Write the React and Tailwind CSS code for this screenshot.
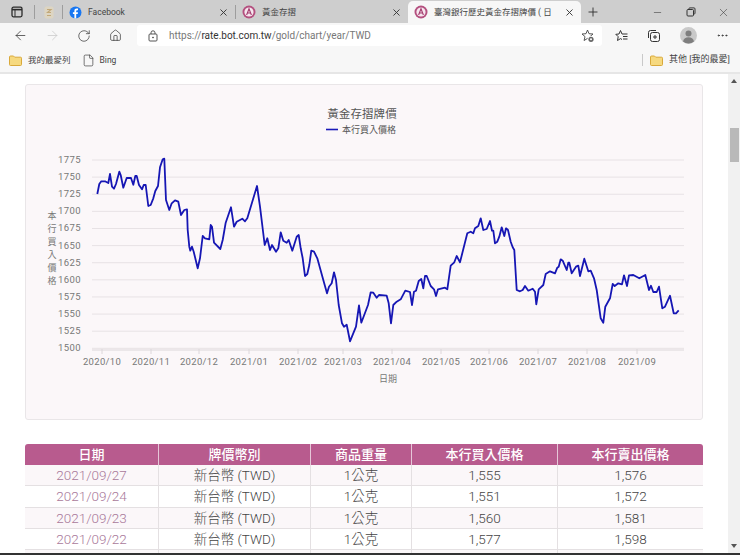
import {
  ArrowLeft,
  ArrowRight,
  RotateCw,
  Home,
  Plus,
  X,
  Minus,
  MoreHorizontal,
  File,
} from "lucide-react";

const cjk = "font-['Roboto','Noto_Sans_CJK_TC',sans-serif]";

/* line traced in three stretches, [ox, oy] is where each stretch starts */
const stretches = [
  [30, 90, [[202,312],[208,282],[214,274],[225,274],[235,279],[240,252],[246,290],[252,296],[258,282],[268,245],[272,255],[280,293],[290,264],[303,264],[310,284],[316,258],[320,258],[327,285],[336,298],[341,285],[347,285],[355,348],[362,345],[370,325],[376,303],[384,288],[390,232],[398,208],[403,206],[408,330],[418,360],[425,340],[435,331],[445,335],[453,375],[463,360],[471,358],[473,420],[478,470],[481,482],[486,470],[491,485],[503,535],[510,505],[518,438],[525,445],[538,448],[542,405],[546,410],[552,458],[571,477],[578,450],[587,398],[603,352],[612,410],[620,395],[637,386],[645,394],[652,385],[681,288],[690,350]]],
  [260, 200, [[0,20],[14,135],[22,115],[30,150],[36,135],[48,155],[55,145],[62,97],[70,122],[80,128],[86,120],[97,152],[110,110],[116,105],[122,145],[128,175],[135,228],[142,222],[148,195],[154,152],[162,155],[172,175],[190,240],[201,280],[207,260],[215,250],[222,217],[228,240],[236,315],[246,370],[252,380],[260,374],[270,424],[288,380],[297,316],[304,368],[324,315],[332,277],[340,278],[350,293],[357,285],[380,287],[386,310],[393,370],[400,315],[410,305],[422,298],[436,272],[450,276],[456,315],[462,275],[468,272],[476,243],[484,237],[490,265],[495,228],[500,228],[512,258],[522,268],[528,288],[534,268],[555,263],[562,268],[572,197],[583,187],[590,168],[600,187],[622,100],[632,95],[640,100]]],
  [470, 200, [[15,85],[25,78],[32,55],[40,90],[50,87],[60,63],[66,92],[70,92],[75,130],[82,125],[88,110],[95,82],[103,108],[108,85],[114,90],[122,125],[128,142],[133,150],[140,270],[150,274],[158,270],[165,258],[175,272],[188,266],[195,275],[199,313],[206,268],[220,255],[227,222],[240,214],[255,220],[262,203],[266,200],[272,178],[278,182],[290,210],[295,188],[298,188],[305,220],[318,200],[325,197],[330,228],[343,176],[355,214],[362,212],[372,235],[380,270],[392,355],[400,368],[406,320],[420,295],[428,252],[434,258],[445,250],[456,253],[462,226],[471,258],[477,226],[490,225],[508,235],[526,225],[537,270],[543,257],[550,276],[560,276],[567,260],[577,325],[585,320],[600,287],[611,340],[618,340],[626,331]]],
];

const linePoints = stretches
  .flatMap(([ox, oy, pts]) => pts.map(([x, y]) => `${(ox + x / 3).toFixed(1)},${(oy + y / 3).toFixed(1)}`))
  .join(" ");

const yTicks = [1775, 1750, 1725, 1700, 1675, 1650, 1625, 1600, 1575, 1550, 1525, 1500];
const xTicks = [
  ["2020/10", 102], ["2020/11", 151], ["2020/12", 199], ["2021/01", 249],
  ["2021/02", 298], ["2021/03", 343], ["2021/04", 392], ["2021/05", 441],
  ["2021/06", 489], ["2021/07", 538], ["2021/08", 587], ["2021/09", 637],
];

const rows = [
  ["2021/09/27", "1,555", "1,576"],
  ["2021/09/24", "1,551", "1,572"],
  ["2021/09/23", "1,560", "1,581"],
  ["2021/09/22", "1,577", "1,598"],
  ["2021/09/17", "1,566", "1,587"],
];

function BotLogo() {
  return (
    <svg width="14" height="14" viewBox="0 0 14 14" className="shrink-0">
      <circle cx="7" cy="7" r="6.5" fill="#b4507f" />
      <circle cx="7" cy="7" r="4.6" fill="#f6e6ee" />
      <path d="M4.6 10 7 3.8 9.4 10M5.5 8h3" fill="none" stroke="#a23a6c" strokeWidth="1.1" />
    </svg>
  );
}

function FolderIcon() {
  return (
    <svg width="13" height="11" viewBox="0 0 13 11" className="shrink-0">
      <path d="M.5 2A1 1 0 0 1 1.5 1h3l1.2 1.2h5.8a1 1 0 0 1 1 1V9.500a1 1 0 0 1-1 1h-10a1 1 0 0 1-1-1z" fill="#f6d97f" stroke="#d9a93a" />
    </svg>
  );
}

function Tab({ icon, title, width, active, close = true }) {
  return (
    <div
      className={`flex items-center h-[22px] shrink-0 pl-[6px] pr-[6px] ${active ? "bg-[#f7f7f7] rounded-t-[5px]" : ""} ${width}`}
    >
      {icon}
      <span className={`ml-[6px] pt-[1px] flex-1 whitespace-nowrap overflow-hidden text-[8.5px] text-[#444] ${cjk}`}>{title}</span>
      {close && <X size={11} strokeWidth={2} className="text-[#333] shrink-0" />}
    </div>
  );
}

function Sep() {
  return <div className="w-px h-[14px] bg-[#9d9d9d] shrink-0" />;
}

function TabStrip() {
  return (
    <div className="h-[23px] bg-[#cecece] flex items-end shrink-0">
      <div className="w-[34px] h-[22px] flex items-center justify-center shrink-0">
        <svg width="12" height="12" viewBox="0 0 12 12" className="mr-[1px]">
          <rect x="1" y="1.200" width="10" height="9.600" rx="1.500" fill="none" stroke="#2a2a2a" strokeWidth="1.300" />
          <path d="M1 3.600h10" stroke="#2a2a2a" strokeWidth="1.600" />
          <path d="M4 3.600v7" stroke="#2a2a2a" strokeWidth="1" />
        </svg>
      </div>
      <div className="h-[22px] flex items-center"><Sep /></div>
      <div className="w-[27px] h-[22px] flex items-center justify-center shrink-0">
        <svg width="10" height="13" viewBox="0 0 10 13">
          <rect x="0.500" y="0.500" width="9" height="12" rx="2" fill="#ddd5c2" />
          <path d="M3 3.500h4L3.500 6.500h3.500M3 9.500h4" stroke="#c2a878" strokeWidth="1.100" fill="none" />
        </svg>
      </div>
      <div className="h-[22px] flex items-center"><Sep /></div>
      <div className="flex h-[22px] items-center">
        <Tab
          width="w-[172px]"
          title="Facebook"
          icon={
            <svg width="13" height="13" viewBox="0 0 13 13" className="shrink-0">
              <circle cx="6.500" cy="6.500" r="6" fill="#1877f2" />
              <path d="M7.200 12.500V8h1.500l.3-1.800H7.200V5.100c0-.5.3-.9.9-.9H9V2.600c-.4 0-.9-.1-1.300-.1-1.400 0-2.300.9-2.300 2.300v1.400H3.900V8h1.500v4.500z" fill="#fff" />
            </svg>
          }
        />
        <Sep />
        <Tab width="w-[172px]" title="黃金存摺" icon={<BotLogo />} />
      </div>
      <Tab active width="w-[173px]" title="臺灣銀行歷史黃金存摺牌價 ( 日" icon={<BotLogo />} />
      <div className="h-[22px] w-[24px] flex items-center justify-center shrink-0">
        <Plus size={14} strokeWidth={1.6} className="text-[#333]" />
      </div>
      <div className="flex-1 flex h-[22px] items-center justify-end text-[#333]">
        <div className="w-[33px] flex justify-center"><Minus size={11} strokeWidth={1.2} /></div>
        <div className="w-[33px] flex justify-center">
          <svg width="10" height="10" viewBox="0 0 10 10" fill="none" stroke="#333">
            <rect x="1" y="2.500" width="6.500" height="6.500" rx="1" />
            <path d="M3 2.500V1.500a.6.6 0 0 1 .6-.6H8a1 1 0 0 1 1 1v4.400a.6.6 0 0 1-.6.6H7.500" />
          </svg>
        </div>
        <div className="w-[33px] flex justify-center"><X size={13} strokeWidth={1} /></div>
      </div>
    </div>
  );
}

function ToolBtn({ children, className = "" }) {
  return <div className={`w-[32px] h-[25px] flex items-center justify-center shrink-0 ${className}`}>{children}</div>;
}

function Toolbar() {
  return (
    <div className="h-[25px] bg-[#f7f7f7] flex items-center pl-[4px] text-[#333] shrink-0">
      <ToolBtn><ArrowLeft size={15} strokeWidth={1.2} /></ToolBtn>
      <ToolBtn><ArrowRight size={15} strokeWidth={1.2} className="text-[#c8c8c8]" /></ToolBtn>
      <ToolBtn><RotateCw size={14} strokeWidth={1.2} /></ToolBtn>
      <ToolBtn className="pr-[2px]"><Home size={13} strokeWidth={1.3} /></ToolBtn>
      <div className="ml-[5px] w-[465px] h-[21px] bg-white rounded-[3px] flex items-center shrink-0">
        <svg width="10" height="12" viewBox="0 0 10 12" fill="none" stroke="#555" className="ml-[11px] shrink-0">
          <rect x="1" y="4" width="8" height="7" rx="1" />
          <path d="M3 4V2.800a2 2 0 0 1 4 0V4" />
          <circle cx="5" cy="7.500" r=".5" fill="#555" />
        </svg>
        <span className="ml-[11px] flex-1 text-[10px] text-[#777] font-['Roboto',sans-serif]">
          https://<span className="text-[#333]">rate.bot.com.tw</span>/gold/chart/year/TWD
        </span>
        <svg width="14" height="14" viewBox="0 0 14 14" fill="none" stroke="#444" strokeWidth=".9" className="mr-[7px] shrink-0">
          <path d="M6.500 1 8 4.700 12 5 9 7.600 9.900 11.500 6.500 9.400 3.100 11.500 4 7.600 1 5 5 4.700z" />
          <circle cx="10" cy="10.300" r="3.400" fill="#fff" stroke="none" />
          <circle cx="10" cy="10.300" r="2.600" fill="#666" stroke="none" />
          <circle cx="10" cy="10.300" r="1" fill="#fff" stroke="none" />
        </svg>
      </div>
      <div className="ml-[4px] flex items-center">
        <ToolBtn>
          <svg width="14" height="14" viewBox="0 0 14 14" fill="none" stroke="#333" strokeWidth="1">
            <path d="M7 5 5.500 1.500 4 5 .8 5.300 3.200 7.700 2.500 11.500 5.500 9.600 7 10.500" />
            <path d="M7 5h5.500M8 7.500h4.500M8 10h4.500" />
          </svg>
        </ToolBtn>
        <ToolBtn>
          <svg width="14" height="14" viewBox="0 0 14 14" fill="none" stroke="#333" strokeWidth="1">
            <rect x="3.500" y="3.500" width="9" height="9" rx="2" />
            <path d="M1.500 9V3.500a2 2 0 0 1 2-2H9M8 6v4M6 8h4" />
          </svg>
        </ToolBtn>
        <div className="w-[36px] flex justify-center">
          <svg width="17" height="17" viewBox="0 0 17 17">
            <circle cx="8.500" cy="8.500" r="8.500" fill="#c9c9c9" />
            <circle cx="8.500" cy="6.600" r="3" fill="#7e7e7e" />
            <path d="M3 14.500c.6-3 2.800-4.200 5.500-4.200s4.900 1.200 5.500 4.200a8.500 8.500 0 0 1-11 0z" fill="#7e7e7e" />
          </svg>
        </div>
        <ToolBtn><MoreHorizontal size={13} strokeWidth={1.6} /></ToolBtn>
      </div>
    </div>
  );
}

function FavBar() {
  return (
    <div className={`h-[26px] bg-[#f7f7f7] border-b-2 border-[#e6e6e6] flex items-center pl-[9px] pr-[10px] text-[#444] shrink-0 ${cjk}`}>
      <FolderIcon />
      <span className="ml-[6px] text-[8.5px]">我的最愛列</span>
      <File size={13} strokeWidth={1.2} className="ml-[11px] text-[#333]" />
      <span className="ml-[5px] text-[8.5px]">Bing</span>
      <div className="ml-auto w-px h-[12px] bg-[#c9c9c9]" />
      <div className="ml-[7px]"><FolderIcon /></div>
      <span className="ml-[6px] text-[9px]">其他 [我的最愛]</span>
    </div>
  );
}

function Chart() {
  const label = "Roboto, 'Noto Sans CJK TC', sans-serif";
  return (
    <svg width="676" height="334" viewBox="26 85 676 334" className="block">
      <text x="362" y="118" textAnchor="middle" fontSize="11.500" letterSpacing="0.1" fill="#555" fontFamily={label}>黃金存摺牌價</text>
      <path d="M326 129.500h12" stroke="#1a1ab8" strokeWidth="1.600" />
      <text x="342" y="132.500" fontSize="9" fill="#555" fontFamily={label}>本行買入價格</text>

      {yTicks.map((v, i) => {
        const y = 160 + i * 17.12;
        return (
          <g key={v}>
            <path d={`M92 ${y}H684`} stroke="#e7e2e5" strokeWidth="1" />
            <text x="81" y={y + 3} textAnchor="end" fontSize="9.500" letterSpacing="0.4" fill="#777" fontFamily={label}>{v}</text>
          </g>
        );
      })}
      <path d="M92 350H684" stroke="#dcd7da" strokeWidth="1" />

      {xTicks.map(([t, x]) => (
        <g key={t}>
          <path d={`M${x} 349V354`} stroke="#dcd7da" strokeWidth="1" />
          <text x={x} y="365" textAnchor="middle" fontSize="9.500" letterSpacing="0.3" fill="#777" fontFamily={label}>{t}</text>
        </g>
      ))}

      {["本", "行", "買", "入", "價", "格"].map((c, i) => (
        <text key={c} x="52" y={219 + i * 13} textAnchor="middle" fontSize="9" fill="#777" fontFamily={label}>{c}</text>
      ))}
      <text x="388" y="382" textAnchor="middle" fontSize="9" fill="#777" fontFamily={label}>日期</text>

      <polyline points={linePoints} fill="none" stroke="#1616b4" strokeWidth="1.800" strokeLinejoin="round" />
    </svg>
  );
}

function PriceTable() {
  return (
    <table className={`mt-[24px] w-[678px] table-fixed border-separate border-spacing-0 text-center ${cjk}`}>
      <colgroup>
        <col className="w-[133px]" />
        <col className="w-[152px]" />
        <col className="w-[101px]" />
        <col className="w-[146px]" />
        <col className="w-[146px]" />
      </colgroup>
      <thead>
        <tr className="bg-[#b85b8e] text-white text-[13px] font-medium h-[21px]">
          <th className="rounded-tl-[3px] font-medium">日期</th>
          <th className="border-l border-[#e6c6d8] font-medium">牌價幣別</th>
          <th className="border-l border-[#e6c6d8] font-medium">商品重量</th>
          <th className="border-l border-[#e6c6d8] font-medium">本行買入價格</th>
          <th className="border-l border-[#e6c6d8] rounded-tr-[3px] font-medium">本行賣出價格</th>
        </tr>
      </thead>
      <tbody>
        {rows.map(([date, buy, sell], i) => (
          <tr key={date} className={`h-[21px] text-[13.5px] font-light text-[#444] ${i % 2 === 0 ? "bg-[#fbf7f9]" : "bg-white"}`}>
            <td className="border-b border-[#e4e0e2] text-[#a9799a] p-0">{date}</td>
            <td className="border-b border-l border-[#e4e0e2] p-0">新台幣 (TWD)</td>
            <td className="border-b border-l border-[#e4e0e2] p-0">1公克</td>
            <td className="border-b border-l border-[#e4e0e2] p-0">{buy}</td>
            <td className="border-b border-l border-[#e4e0e2] p-0">{sell}</td>
          </tr>
        ))}
      </tbody>
    </table>
  );
}

function Scrollbar() {
  return (
    <div className="w-[12px] bg-[#f1f1f1] flex flex-col items-center shrink-0 text-[#555]">
      <div className="h-[13px] flex items-center justify-center">
        <div className="w-0 h-0 border-x-[3px] border-x-transparent border-b-[4px] border-b-[#555]" />
      </div>
      <div className="mt-[41px] w-[9px] h-[34px] bg-[#b9b9b9]" />
      <div className="mt-auto h-[15px] flex items-center justify-center">
        <div className="w-0 h-0 border-x-[3px] border-x-transparent border-t-[4px] border-t-[#555]" />
      </div>
    </div>
  );
}

export default function App() {
  return (
    <div className="w-[740px] h-[555px] overflow-hidden flex flex-col bg-white">
      <TabStrip />
      <Toolbar />
      <FavBar />
      <div className="flex-1 flex min-h-0">
        <div className="flex-1 overflow-hidden px-[25px] pt-[10px] min-w-0">
          <div className="w-[678px] h-[336px] bg-[#fbf7f9] border border-[#e9e6e8] rounded-[3px]">
            <Chart />
          </div>
          <PriceTable />
        </div>
        <Scrollbar />
      </div>
      <div className="h-[2px] bg-[#333] shrink-0" />
    </div>
  );
}
